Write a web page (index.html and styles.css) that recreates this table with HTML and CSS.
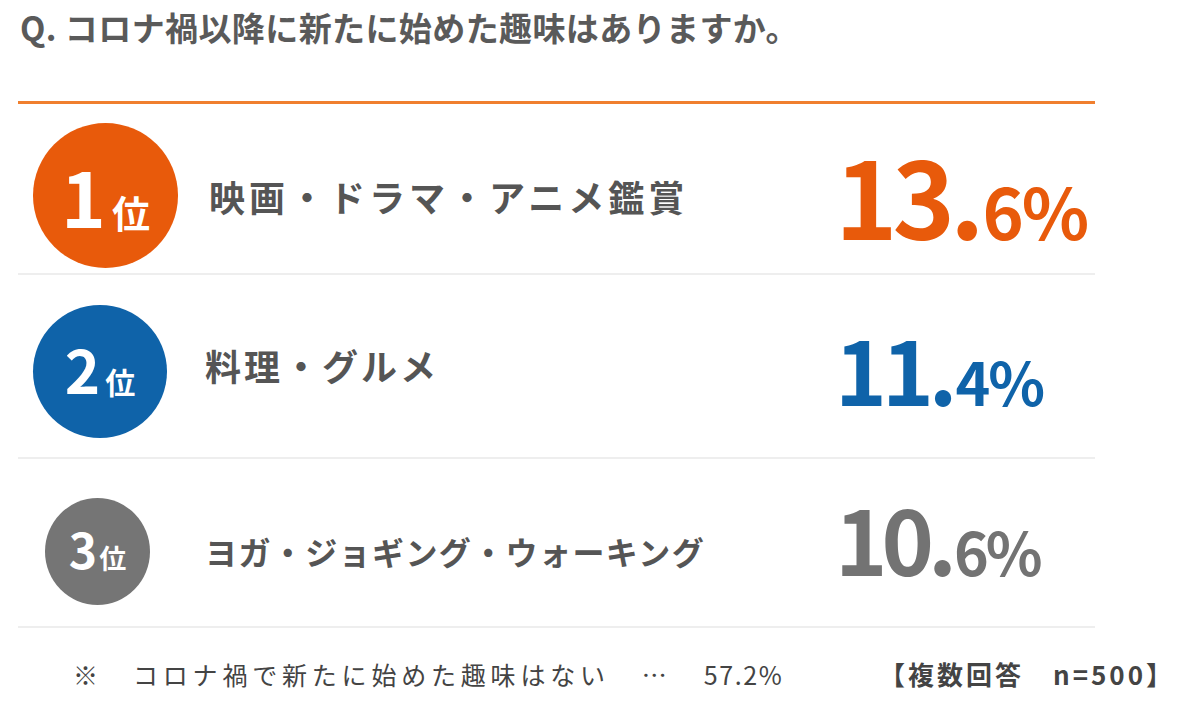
FILE: index.html
```html
<!DOCTYPE html>
<html lang="ja">
<head>
<meta charset="utf-8">
<title>コロナ禍以降に新たに始めた趣味</title>
<link rel="stylesheet" href="styles.css">
</head>
<body>
<div class="page">
  <h1 class="question">Q. コロナ禍以降に新たに始めた趣味はありますか。</h1>
  <ol class="ranks">
    <li class="rank r1">
      <div class="badge-col"><span class="badge"><span class="num">1</span><span class="i">位</span></span></div>
      <div class="label">映画・ドラマ・アニメ鑑賞</div>
      <div class="pct"><span class="big">13.</span><span class="small">6%</span></div>
    </li>
    <li class="rank r2">
      <div class="badge-col"><span class="badge"><span class="num">2</span><span class="i">位</span></span></div>
      <div class="label">料理・グルメ</div>
      <div class="pct"><span class="big">11.</span><span class="small">4%</span></div>
    </li>
    <li class="rank r3">
      <div class="badge-col"><span class="badge"><span class="num">3</span><span class="i">位</span></span></div>
      <div class="label">ヨガ・ジョギング・ウォーキング</div>
      <div class="pct"><span class="big">10.</span><span class="small">6%</span></div>
    </li>
  </ol>
  <div class="note">
    <span class="mark">※</span>
    <span class="note-text">コロナ禍で新たに始めた趣味はない</span>
    <span class="dots">…</span>
    <span class="note-val">57.2%</span>
    <span class="meta">【複数回答　n=500】</span>
  </div>
</div>
</body>
</html>
```

FILE: styles.css
```css
* { box-sizing: border-box; }
html, body { margin: 0; padding: 0; background: #fff; }
body {
  font-family: "Noto Sans CJK JP", "Noto Sans", sans-serif;
  color: #555;
}
.page {
  width: 1200px;
  height: 711px;
  padding: 0 105px 0 18px;
}
.question {
  margin: 0;
  height: 104px;
  padding: 5px 0 0 2px;
  font-size: 33px;
  line-height: 44px;
  font-weight: 700;
  letter-spacing: 0.4px;
  color: #5a5a5a;
  border-bottom: 3px solid #f07f2e;
}
.ranks {
  list-style: none;
  margin: 0;
  padding: 0;
}
.rank {
  display: flex;
  align-items: center;
  border-bottom: 2px solid #eeeeee;
}
.r1 { height: 171px; padding-top: 14px; }
.r2 { height: 184px; padding-top: 10px; }
.r3 { height: 169px; padding-top: 17px; }

.badge-col {
  width: 187px;
  flex: none;
  display: flex;
  padding-left: 15px;
}
.badge {
  border-radius: 50%;
  color: #fff;
  font-weight: 700;
  display: flex;
  align-items: baseline;
  justify-content: center;
  line-height: 1;
}
.r1 .badge { width: 145px; height: 145px; background: #e85a0b; padding-top: 34px; }
.r2 .badge { width: 134px; height: 133px; background: #0f63a9; padding-top: 33px; }
.r3 .badge { width: 105px; height: 107px; background: #757575; padding-top: 26px; margin-left: 12px; }
.r1 .num { font-size: 76px; margin-right: 6px; }
.r1 .i { font-size: 38px; }
.r2 .num { font-size: 60px; margin-right: 5px; }
.r2 .i { font-size: 30px; }
.r3 .num { font-size: 48px; margin-right: 2px; }
.r3 .i { font-size: 27px; }

.label {
  flex: 1;
  font-weight: 700;
  color: #555;
  white-space: nowrap;
}
.r1 .label { font-size: 36px; letter-spacing: 4px; padding-left: 4px; }
.r2 .label { font-size: 36px; letter-spacing: 3px; margin-bottom: 12px; }
.r3 .label { font-size: 32px; letter-spacing: 1.4px; }

.pct {
  width: 260px;
  flex: none;
  display: flex;
  align-items: baseline;
  font-weight: 700;
  line-height: 1;
  margin-left: -4px;
}
.r1 .pct { color: #e85a0b; margin-bottom: 4px; }
.r2 .pct { color: #0f63a9; margin-bottom: 6px; }
.r3 .pct { color: #737373; margin-bottom: 28px; }
.big { letter-spacing: -5px; }
.small { letter-spacing: -2px; margin-left: 3px; }
.r1 .big { font-size: 106px; }
.r1 .small { font-size: 70px; }
.r2 .big { font-size: 88px; }
.r2 .small { font-size: 59px; }
.r3 .big { font-size: 89px; letter-spacing: -6px; }
.r3 .small { font-size: 59px; letter-spacing: -3px; }

.note {
  display: flex;
  align-items: baseline;
  padding-top: 27px;
  font-size: 25px;
  color: #444;
  white-space: nowrap;
}
.mark { margin-left: 55px; width: 60px; }
.note-text { letter-spacing: 4.8px; }
.dots { margin-left: 32px; width: 62px; }
.note-val { letter-spacing: 1.6px; }
.meta { margin-left: auto; margin-right: -80px; font-weight: 700; font-size: 26px; letter-spacing: 3px; }
```
